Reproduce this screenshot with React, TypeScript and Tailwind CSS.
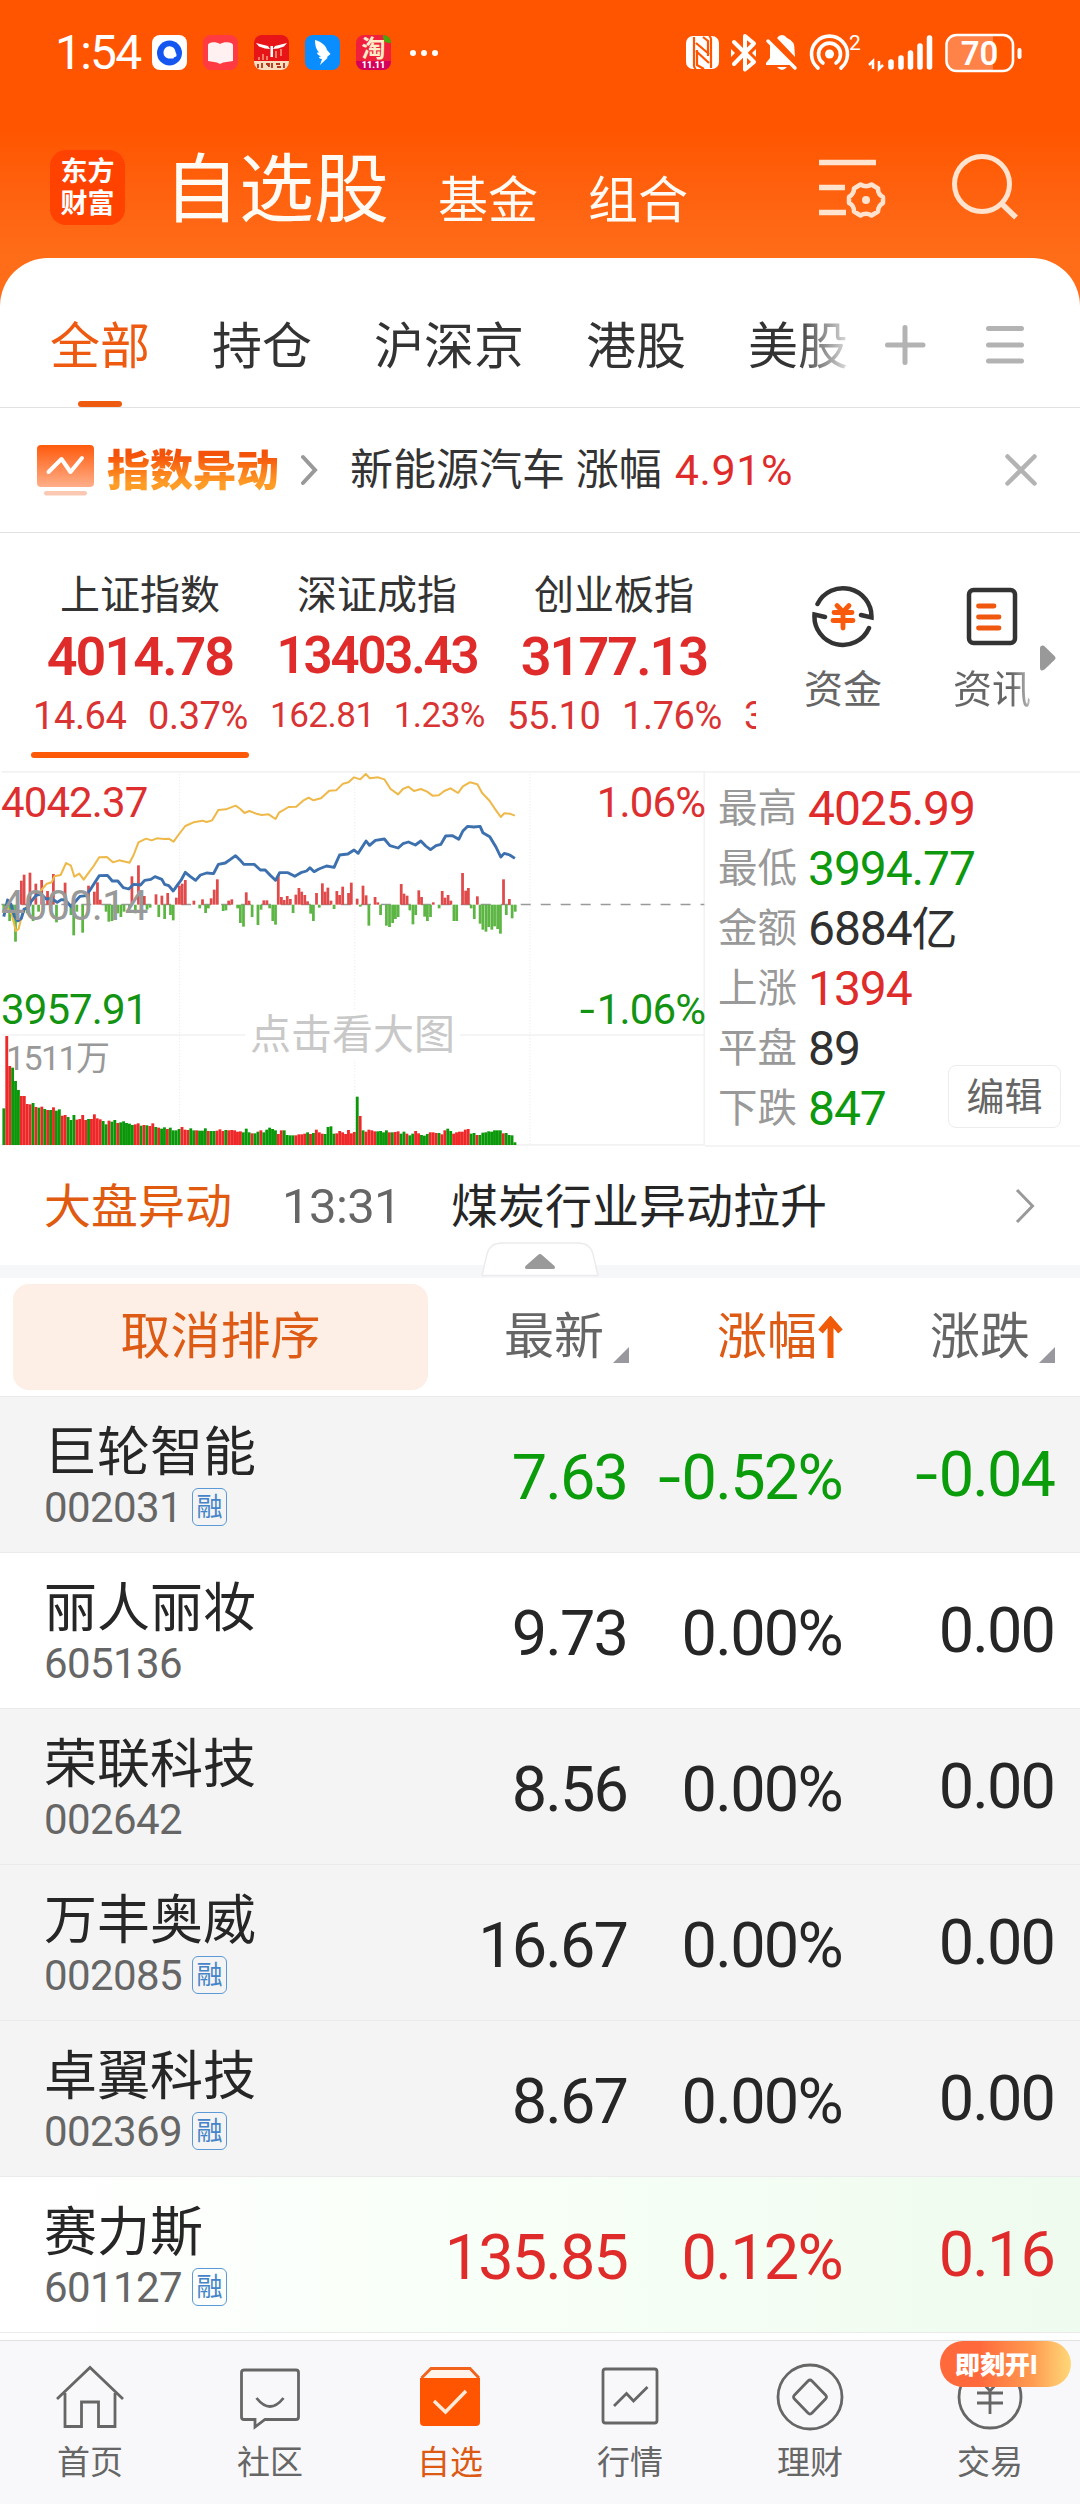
import type { ReactNode } from 'react';

const GROUPS = ['全部', '持仓', '沪深京', '港股', '美股'];

const INDEXES = [
  { name: '上证指数', value: '4014.78', change: '14.64', percent: '0.37%', active: true },
  { name: '深证成指', value: '13403.43', change: '162.81', percent: '1.23%', small: true },
  { name: '创业板指', value: '3177.13', change: '55.10', percent: '1.76%' },
  { name: '', value: '', change: '3', percent: '' },
];

const STATS = [
  { label: '最高', value: '4025.99', color: 'text-[#e02b2b]' },
  { label: '最低', value: '3994.77', color: 'text-[#0d980d]' },
  { label: '金额', value: '6884亿', color: 'text-[#303030]' },
  { label: '上涨', value: '1394', color: 'text-[#e02b2b]' },
  { label: '平盘', value: '89', color: 'text-[#303030]' },
  { label: '下跌', value: '847', color: 'text-[#0d980d]' },
];

const STOCKS = [
  { name: '巨轮智能', code: '002031', margin: true, price: '7.63', percent: '-0.52%', change: '-0.04', color: 'text-[#0a9c0a]', bg: 'bg-[#f4f4f4]' },
  { name: '丽人丽妆', code: '605136', margin: false, price: '9.73', percent: '0.00%', change: '0.00', color: 'text-[#262626]', bg: 'bg-white' },
  { name: '荣联科技', code: '002642', margin: false, price: '8.56', percent: '0.00%', change: '0.00', color: 'text-[#262626]', bg: 'bg-[#f4f4f4]' },
  { name: '万丰奥威', code: '002085', margin: true, price: '16.67', percent: '0.00%', change: '0.00', color: 'text-[#262626]', bg: 'bg-[#f4f4f4]' },
  { name: '卓翼科技', code: '002369', margin: true, price: '8.67', percent: '0.00%', change: '0.00', color: 'text-[#262626]', bg: 'bg-[#f4f4f4]' },
  { name: '赛力斯', code: '601127', margin: true, price: '135.85', percent: '0.12%', change: '0.16', color: 'text-[#e02b2b]', bg: 'bg-linear-to-r from-white via-[#f7fff7] to-[#effbee]' },
];

// minute volume, one entry per bar
const VOLUMES = [
  110, 327, 237, 232, 192, 165, 147, 147, 123, 122, 126, 114, 112, 115, 108, 105, 105, 113, 103, 107, 88, 90, 84, 75, 90,
  76, 78, 90, 75, 78, 78, 92, 80, 77, 72, 62, 73, 70, 75, 66, 68, 71, 66, 64, 60, 62, 65, 58, 60, 59, 57, 65, 54, 52, 49,
  53, 48, 52, 44, 44, 48, 54, 46, 45, 50, 44, 44, 43, 43, 50, 42, 42, 42, 43, 47, 42, 45, 44, 45, 44, 40, 41, 38, 49, 38,
  35, 35, 40, 44, 38, 46, 52, 48, 44, 33, 44, 44, 30, 29, 29, 29, 32, 32, 34, 38, 33, 36, 46, 38, 34, 33, 54, 56, 34, 35,
  42, 38, 33, 45, 35, 39, 145, 87, 44, 40, 46, 44, 41, 41, 42, 38, 44, 38, 38, 39, 41, 34, 40, 34, 29, 34, 42, 35, 30, 28,
  33, 38, 38, 36, 36, 32, 44, 49, 42, 34, 38, 40, 40, 46, 48, 34, 36, 30, 30, 37, 38, 41, 40, 44, 44, 44, 35, 36, 30, 29, 8,
];

const VOLUME_SIDES =
  'grrgggrrrrgrgrgrgrggrrgggrrrrgrrrrggrggrgggggrrgrgrrgrggrggggrrrggrgggrggrrrgrrrrrgggrggrgggggrrggggrrrrgrgrrrggggrrrrrrrgrgrrrrggggrgrrggrggrrgggrrrgrrggrrrrrrggrggggggggrgggg';

const UP_BARS: [number, number][] = [
  [62, 347], [70, 329], [87, 323], [104, 356], [121, 345], [138, 378], [155, 327], [189, 353], [257, 362], [274, 380],
  [283, 352], [291, 404], [383, 334], [402, 301], [419, 393], [453, 388], [470, 392], [487, 384], [512, 398], [521, 362],
  [529, 356], [538, 345], [563, 407], [588, 403], [613, 400], [622, 374], [631, 343], [664, 407], [673, 403], [715, 382],
  [723, 407], [766, 406], [775, 406], [808, 330], [817, 396], [825, 405], [834, 393], [843, 402], [859, 389], [868, 369],
  [876, 380], [885, 390], [893, 409], [919, 384], [936, 355], [944, 380], [952, 368], [961, 407], [978, 378], [986, 390],
  [995, 365], [1012, 384], [1020, 353], [1037, 401], [1054, 362], [1063, 391], [1089, 396], [1097, 412], [1165, 357],
  [1173, 386], [1182, 392], [1216, 376], [1224, 396], [1258, 412], [1284, 378], [1292, 398], [1301, 390], [1309, 407],
  [1343, 324], [1352, 377], [1360, 369], [1386, 394], [1462, 343], [1479, 402],
];

const DOWN_BARS: [number, number][] = [
  [11, 440], [28, 468], [37, 450], [45, 530], [79, 445], [96, 468], [112, 440], [164, 472], [206, 450], [214, 511],
  [223, 440], [240, 503], [308, 440], [316, 470], [325, 468], [334, 440], [342, 445], [351, 456], [360, 440], [376, 432],
  [393, 445], [427, 434], [436, 428], [461, 456], [478, 462], [495, 450], [503, 466], [580, 430], [597, 444], [605, 430],
  [648, 438], [656, 436], [690, 430], [698, 474], [707, 485], [732, 456], [749, 480], [758, 434], [783, 430], [792, 468],
  [800, 479], [851, 444], [902, 446], [910, 468], [927, 428], [970, 432], [1046, 425], [1071, 482], [1105, 450],
  [1122, 482], [1131, 486], [1140, 474], [1148, 462], [1156, 456], [1190, 436], [1199, 478], [1207, 450], [1233, 455],
  [1241, 468], [1250, 456], [1275, 430], [1318, 468], [1326, 468], [1368, 430], [1377, 462], [1394, 476], [1402, 494],
  [1411, 500], [1419, 486], [1428, 494], [1436, 484], [1445, 492], [1453, 506], [1470, 450], [1487, 460], [1496, 440],
];

const PRICE_LINE =
  '11,455 22,405 32,418 42,455 52,468 62,460 70,432 82,428 90,410 106,390 120,388 134,402 150,400 166,412 178,404 190,405 206,425 220,408 232,394 250,392 262,374 274,355 288,332 312,331 326,348 342,348 358,368 374,372 388,358 408,360 420,346 438,343 450,335 470,343 478,358 490,362 503,378 514,362 526,345 538,322 552,334 568,346 582,330 600,324 620,326 634,298 654,294 668,284 684,272 696,284 708,298 738,298 756,315 770,315 786,332 800,346 812,323 836,323 856,334 876,322 890,318 900,308 912,320 926,312 948,303 970,307 986,270 1010,267 1028,255 1040,265 1054,242 1063,228 1073,241 1090,226 1116,222 1132,242 1156,249 1170,236 1186,231 1206,240 1222,228 1236,243 1250,254 1266,242 1280,238 1294,213 1314,212 1332,223 1344,198 1358,184 1376,186 1394,184 1402,203 1422,215 1440,246 1454,276 1464,265 1480,270 1495,280';

const AVERAGE_LINE =
  '11,425 22,430 34,448 46,498 54,492 64,450 78,425 100,400 120,375 136,356 150,352 158,334 176,330 192,294 206,302 216,335 230,326 243,344 256,325 272,303 288,277 310,276 328,292 346,286 376,293 388,270 402,232 424,221 440,226 456,220 476,222 490,221 504,230 518,210 538,183 562,172 588,167 600,171 616,166 634,135 656,133 684,122 698,132 710,144 724,138 744,146 760,150 780,148 800,162 810,143 838,126 860,125 880,107 896,98 910,106 932,100 956,77 976,76 996,56 1012,52 1028,37 1046,43 1062,27 1074,40 1098,37 1116,43 1134,72 1156,88 1170,72 1186,65 1202,78 1222,72 1240,80 1256,92 1274,91 1290,78 1308,70 1330,84 1344,64 1364,52 1386,58 1400,84 1422,108 1436,130 1454,156 1464,145 1480,146 1495,152';

// number whose minus sign is drawn wider than the font's hyphen
function Num({ value }: { value: string }) {
  if (!value.startsWith('-')) return <>{value}</>;
  return (
    <>
      <span className="mr-[3px] inline-block origin-right scale-x-130">-</span>
      {value.slice(1)}
    </>
  );
}

function StatusBar() {
  return (
    <div className="flex h-26 items-center pt-[1px] pl-[55px] text-white">
      <span className="mr-2.5 w-[87px] text-[48px] leading-none tracking-[-1.8px]">1:54</span>
      <div className="flex items-center gap-4">
        <svg className="size-[35px]" viewBox="0 0 35 35">
          <rect width="35" height="35" rx="8" fill="#fff" />
          <circle cx="17.5" cy="18" r="12.5" fill="#1556f0" />
          <path d="M11.5 17.5a6 6 0 0 1 12-.5l1 2.500a2 2 0 0 1-1.500 2.500c-.8 0-1.200.5-1.500 1.500h-4c-3.500 0-6-2.500-6-6z" fill="#fff" />
        </svg>
        <svg className="size-[35px]" viewBox="0 0 35 35">
          <rect width="35" height="35" rx="8" fill="#ff3a42" />
          <path d="M5 10c0-3 8-4 12-1 4-3 13-2 13 1v16c-4 1-9 .5-13 3-4-2.500-8-2-12-3z" fill="#fff1f1" />
        </svg>
        <svg className="size-[35px]" viewBox="0 0 35 35">
          <rect width="35" height="35" rx="8" fill="#e81518" />
          <path d="M0 26h35v1a8 8 0 0 1-8 8H8a8 8 0 0 1-8-8z" fill="#f8dfc0" />
          <path d="M2 8l12 3 2 3-5-.5-6-2zM33 8l-12 3-2 3 5-.5 6-2zM16.500 11h2.500v11h-2.500z" fill="#fff" />
          <path d="M5 22v3M9 19v6M13 21v4M22 16v7M27 14v7" stroke="#f0a080" strokeWidth="1.500" />
          <path d="M4 29v4M8 28v5M12 29h3v3M18 28v5M22 29h4M23 32h4M30 28v5" stroke="#b3361f" strokeWidth="1.800" />
        </svg>
        <svg className="size-[35px]" viewBox="0 0 35 35">
          <rect width="35" height="35" rx="8" fill="#0a8dff" />
          <path d="M10 5c7 2 11 6 12 10l3.500 4-3.500 3 .5 1-7.500 7 2-6c-2 0-3-1-3-2l2-.5c-3-1-4-3-4-4l2 0c-3-3-4-7-4-12.500z" fill="#fff" />
        </svg>
        <div className="relative flex size-[35px] flex-col items-center overflow-hidden rounded-lg bg-linear-to-b from-[#f0203c] from-75% to-[#d4005c] to-75%">
          <span className="absolute -top-1 -right-1 size-3 rounded-full bg-[#47a80c]" />
          <span className="mt-0.5 text-[24px] leading-6 font-bold text-[#ffedc9]">淘</span>
          <span className="text-[9px] leading-[9px] font-black">11.11</span>
        </div>
      </div>
      <div className="ml-[19px] flex gap-[5px]">
        <i className="size-[6px] rounded-full bg-white" />
        <i className="size-[6px] rounded-full bg-white" />
        <i className="size-[6px] rounded-full bg-white" />
      </div>
      <svg className="ml-auto h-[50px] w-[340px]" viewBox="684 27 340 50" fill="none" stroke="#fff">
        {/* nfc */}
        <rect x="686" y="35" width="33" height="33" rx="7" fill="#fff" stroke="none" />
        <path d="M694 36v29q0 2 2 3M711 67V38q0-2-2-3M697 49v15l7 4M708 55V40l-5-4M696 42l13 11M696 50l13 12" stroke="#ff5500" strokeWidth="2.200" />
        {/* bluetooth */}
        <path d="M734 41l20 20-9 7.500V35l9 7.500L734 63" strokeWidth="4" strokeLinejoin="round" strokeLinecap="round" />
        <path d="M731 48v8l4-4zM756 48v8l-4-4z" fill="#fff" stroke="none" />
        {/* muted bell */}
        <path d="M777 37q2-3 5-3t5 3q8 3 7.500 12l.5 7zM770 43l24 21h-28v-2l4-5zM777 66h10q-5 6-10 0z" fill="#fff" stroke="none" />
        <path d="M768 40l27 27" strokeWidth="3.500" strokeLinecap="round" />
        {/* hotspot */}
        <circle cx="829.500" cy="53" r="4.500" fill="#fff" stroke="none" />
        <path d="M823 62a11 11 0 1 1 13 0M818 67a18 18 0 1 1 23 0" strokeWidth="3.600" strokeLinecap="round" />
        <text x="849" y="49" fontSize="21" fill="#fff" stroke="none">2</text>
        {/* signal */}
        <path d="M873 68v-8l-4 4M879 60v8l4-4" strokeWidth="2.500" />
        <path d="M891 61v5M901 57v9M910.500 52v14M920 45v21M929.500 37v29" strokeWidth="5.500" strokeLinecap="round" />
        {/* battery */}
        <path d="M956 35h37v34h-37q-8 0-8-8V43q0-8 8-8z" fill="#ff8248" stroke="none" />
        <rect x="946.500" y="34" width="66.500" height="36" rx="10" strokeWidth="2.600" />
        <path d="M1019.500 49v7" strokeWidth="4" strokeLinecap="round" />
        <text x="979.500" y="63.500" fontSize="33" fontWeight="600" fill="#fff" stroke="none" textAnchor="middle">70</text>
      </svg>
      <div className="w-14" />
    </div>
  );
}

function TitleBar() {
  return (
    <div className="flex items-start pt-[46px] pl-[50px] text-[#fffaf3]">
      <div className="flex size-[75px] flex-col items-center justify-center rounded-2xl bg-[#ff4200] text-[27px] leading-[32px] font-bold text-white">
        <span>东方</span>
        <span>财富</span>
      </div>
      <h1 className="mt-[3px] ml-[39px] text-[75px] leading-[75px]">自选股</h1>
      <span className="mt-[26px] ml-[49px] text-[50px] leading-[50px]">基金</span>
      <span className="mt-[26px] ml-[50px] text-[50px] leading-[50px]">组合</span>
      <svg className="-mt-1 ml-[128px] h-[80px] w-[205px]" viewBox="817 146 205 80" fill="none" stroke="#ffe3cf">
        <path d="M820 162.500h57M820 187.500h26M820 212.500h27" strokeWidth="5.500" />
        <path
          d="M861.500 184.500q5.500 3.500 11 0l6.500 4q-.2 6 5 8.500v6q-5 3-5 8.500l-6.500 4q-5.500-3.500-11 0l-6.500-4q.2-6-5-8.500v-6q5-3 5-8.500z"
          strokeWidth="4.500"
          strokeLinejoin="round"
        />
        <circle cx="867" cy="200" r="4" fill="#ffe3cf" stroke="none" />
        <circle cx="983" cy="184" r="27.500" strokeWidth="5" />
        <path d="M1003 204l14 13.500" strokeWidth="5.500" />
      </svg>
    </div>
  );
}

function GroupTabs() {
  return (
    <div className="flex h-[150px] items-center rounded-t-[48px] border-b border-[#e2e2e2] bg-white pl-[50px]">
      <div className="relative flex h-full w-[802px] items-center gap-[62px] overflow-hidden">
        {GROUPS.map((group, i) => (
          <div key={group} className="relative flex h-full shrink-0 items-center">
            <span className={`mt-[28px] text-[50px] leading-none ${i === 0 ? 'text-[#ee5a10]' : 'text-[#333]'}`}>{group}</span>
            {i === 0 && <span className="absolute bottom-0 left-7 h-[6px] w-11 rounded-full bg-[#ee5a10]" />}
          </div>
        ))}
        <span className="absolute top-0 right-0 h-full w-14 bg-linear-to-r from-transparent to-white/90" />
      </div>
      <svg className="mt-[25px] ml-[30px] h-11 w-[146px]" viewBox="882 323 146 44" stroke="#b3b3b3" strokeWidth="5" strokeLinecap="round">
        <path d="M887.500 345h35.500M905 327.500v35M988.500 328.500h33M988.500 345h33M988.500 361h33" />
      </svg>
    </div>
  );
}

function Notice() {
  return (
    <div className="flex h-[125px] items-center border-b border-[#e2e2e2] bg-white pl-[37px]">
      <svg className="h-[51px] w-[57px]" viewBox="0 0 57 51" fill="none">
        <defs>
          <linearGradient id="notice" x1="0" y1="0" x2="0" y2="1">
            <stop stopColor="#ff5a0c" />
            <stop offset="1" stopColor="#ffaf8a" />
          </linearGradient>
        </defs>
        <rect width="57" height="42" rx="4" fill="url(#notice)" />
        <path d="M11.500 27l13-13 9 13L45 13" stroke="#fff" strokeWidth="4" strokeLinecap="round" strokeLinejoin="round" />
        <rect x="7" y="46" width="43" height="4.500" rx="2.200" fill="#fbc9b3" />
      </svg>
      <span className="mt-[2px] ml-[13px] bg-linear-to-b from-[#f4520a] from-20% to-[#ff9c26] to-75% bg-clip-text text-[43px] leading-[50px] font-black text-transparent">指数异动</span>
      <svg className="ml-[22px] h-8 w-[17px]" viewBox="0 0 17 32" fill="none" stroke="#999" strokeWidth="4">
        <path d="M2 3l12 13L2 29" strokeLinecap="round" />
      </svg>
      <p className="ml-8 text-[43px] leading-none whitespace-pre text-[#333]">
        新能源汽车 涨幅<span className="ml-[13px] tracking-[0.6px] text-[#e02b2b]">4.91%</span>
      </p>
      <svg className="mr-[42px] ml-auto size-[34px]" viewBox="0 0 34 34" stroke="#b3b3b3" strokeWidth="4.500" strokeLinecap="round">
        <path d="M3.500 3.500l27 27M30.500 3.500l-27 27" />
      </svg>
    </div>
  );
}

function IndexStrip() {
  return (
    <div className="flex h-[238px] bg-white pl-[31px]">
      <div className="flex w-[725px] gap-[19px] overflow-hidden">
        {INDEXES.map((item) => (
          <div key={item.change} className="flex h-[225px] w-[218px] shrink-0 flex-col">
            <span className="mt-[43px] h-10 text-center text-[40px] leading-10 text-[#333]">{item.name}</span>
            <span
              className={`mt-[12px] flex h-[56px] items-center justify-center font-semibold text-[#e02b2b] ${item.small ? 'text-[51px] tracking-[-2.2px]' : 'text-[54px] tracking-[-2px]'}`}
            >
              {item.value}
            </span>
            <div
              className={`mt-[10px] flex h-11 items-center justify-between pr-px pl-[2px] text-[#d93333] ${item.small ? 'text-[35px] tracking-[-0.5px]' : 'text-[38px] tracking-[-0.4px]'}`}
            >
              <span>{item.change}</span>
              <span>{item.percent}</span>
            </div>
            {item.active && <span className="mt-[14px] h-[6px] w-full rounded-full bg-[#fc5a08]" />}
          </div>
        ))}
      </div>
      <div className="ml-[47px] flex w-20 flex-col items-center pt-[50px]">
        <svg className="h-[66px] w-[66px]" viewBox="-33 -33 66 66" fill="none" stroke="#333" strokeWidth="4.500">
          <path d="M-25.500-12A28.500 28.500 0 0 1 28.500 1.500L18-1M26 12A28.500 28.500 0 0 1-28.500-1.500L-18 1" strokeLinecap="round" />
          <path d="M-6-10.500L0-4l6-6.500M-9-3.500H9M-10 4.500h20M0-4v16" stroke="#f95a0c" strokeWidth="4.800" strokeLinecap="round" />
        </svg>
        <span className="mt-[21px] text-[39px] leading-10 text-[#666]">资金</span>
      </div>
      <div className="ml-[69px] flex w-20 flex-col items-center pt-[50px]">
        <svg className="h-[66px] w-[54px]" viewBox="0 0 54 66" fill="none" stroke="#333" strokeWidth="4.500">
          <rect x="4" y="7" width="46" height="53" rx="4.500" />
          <path d="M13.500 23H29M13.500 34h20.500M13.500 45h20.500" stroke="#f0570f" strokeWidth="4.800" strokeLinecap="round" />
        </svg>
        <span className="mt-[21px] bg-linear-to-r from-[#666] from-75% to-[#bbb] bg-clip-text text-[39px] leading-10 text-transparent">资讯</span>
      </div>
      <svg className="mt-[112px] ml-[8px] h-[26px] w-4" viewBox="0 0 16 26" fill="#999">
        <path d="M0 3q0-3 3-2.500l1.500.8L14.500 11q2 2 0 4L4.500 24.500Q0 27 0 22.500z" />
      </svg>
    </div>
  );
}

function MinuteChart() {
  return (
    <div className="relative h-[376px] w-[705px]">
      <svg className="h-full w-full" viewBox="0 18 2047 1128" preserveAspectRatio="none" fill="none">
        <path d="M4 20.500H2047M4 810H2047M4 1139.500H2047M2045 20V1139" stroke="#f2f2f2" strokeWidth="5" />
        <path d="M521 28V1139M1030 28V1139M1539 28V1139" stroke="#e8e8e8" strokeWidth="3" strokeDasharray="3 6" />
        <path d="M4 418.500H2045" stroke="#999" strokeWidth="5" strokeDasharray="29 29" />
        {UP_BARS.map(([x, y]) => (
          <rect key={x} x={x - 4} y={y} width="8" height={419 - y} fill="#e04a4a" />
        ))}
        {DOWN_BARS.map(([x, y]) => (
          <rect key={x} x={x - 4} y="419" width="8" height={y - 419} fill="#5db544" />
        ))}
        {VOLUMES.map((v, i) => (
          <rect key={i} x={7 + i * 8.48} y={1140 - v} width="8.3" height={v} fill={VOLUME_SIDES[i] === 'r' ? '#ee2828' : '#0a980a'} />
        ))}
        <polyline points={AVERAGE_LINE} stroke="#efb94a" strokeWidth="6" strokeLinejoin="round" />
        <polyline points={PRICE_LINE} stroke="#3d70ae" strokeWidth="8.500" strokeLinejoin="round" />
      </svg>
      {/* axis labels sit over the plot */}
      <div className="absolute inset-0 text-[42px] leading-[42px] tracking-[-0.9px]">
        <span className="absolute top-[11px] left-px text-[#dd2f2f]">4042.37</span>
        <span className="absolute top-[114px] left-px text-[#999]">4000.14</span>
        <span className="absolute top-[218px] left-px text-[#129412]">3957.91</span>
        <span className="absolute top-[266px] left-[6px] text-[34px] tracking-[-1.6px] text-[#999]">1511万</span>
        <span className="absolute top-[11px] right-0 text-[#dd2f2f]">1.06%</span>
        <span className="absolute top-[218px] right-0 text-[#129412]">
          <Num value="-1.06%" />
        </span>
        <span className="absolute top-[239px] left-[245px] bg-white px-[5px] text-[41px] leading-[50px] tracking-normal text-[#c8c8c8]">点击看大图</span>
      </div>
    </div>
  );
}

function StatsPanel() {
  return (
    <div className="relative flex-1 border-y-2 border-[#f4f4f4] pt-[6px] pl-[13px]">
      {STATS.map((stat) => (
        <div key={stat.label} className="flex h-[60px] items-center">
          <span className="w-[90px] text-[39.5px] leading-none text-[#999]">{stat.label}</span>
          <span className={`text-[48px] leading-none tracking-[-1.1px] ${stat.color}`}>
            {stat.value.replace('亿', '')}
            {stat.value.includes('亿') && <span className="text-[46px]">亿</span>}
          </span>
        </div>
      ))}
      <button className="absolute right-[19px] bottom-[17px] h-[63px] w-[113px] rounded-lg border border-[#ececec] bg-white text-[38px] leading-none text-[#666]">
        编辑
      </button>
    </div>
  );
}

function MarketAlert() {
  return (
    <div className="relative h-[131px] border-b-13 border-[#f6f7f9] bg-white">
      <div className="flex h-[118px] items-center pl-[44px] text-[47px] leading-none">
        <span className="text-[#e05a10]">大盘异动</span>
        <span className="ml-[50px] w-[117px] text-[49px] tracking-[-0.6px] text-[#666]">13:31</span>
        <span className="ml-[52px] text-[#262626]">煤炭行业异动拉升</span>
        <svg className="mr-[45px] ml-auto h-[36px] w-5" viewBox="0 0 20 36" fill="none" stroke="#999" strokeWidth="3">
          <path d="M2 2l15.500 16L2 34" />
        </svg>
      </div>
      <svg className="absolute top-[95px] left-[481px] h-[35px] w-[118px]" viewBox="0 0 118 35">
        <path d="M1 33.500L6 12Q9 1 21 1h76q12 0 15 11l5 21.500z" fill="#fff" stroke="#ececee" strokeWidth="1.500" />
        <path d="M57 13q2-2 4 0l12.500 11q1.500 3-1.500 3H46q-3 0-1.500-3z" fill="#999" />
      </svg>
    </div>
  );
}

function SortHeader() {
  return (
    <div className="flex h-[119px] items-center border-b border-[#ebebeb] bg-white pl-[13px] text-[50px] leading-none text-[#666]">
      <button className="h-[106px] w-[415px] rounded-2xl bg-[#fdeee6] text-[#dd5b14]">取消排序</button>
      <div className="ml-[76px] flex w-[213px] items-center">
        最新
        <Corner />
      </div>
      <div className="flex w-[213px] items-center text-[#dd5b14]">
        涨幅
        <svg className="ml-px h-[42px] w-[25px]" viewBox="0 0 25 42" fill="none" stroke="#f05a08" strokeWidth="6">
          <path d="M12.500 4v38M2.500 15.500l10-11.500 10 11.500" />
        </svg>
      </div>
      <div className="flex items-center">
        涨跌
        <Corner />
      </div>
    </div>
  );
}

function Corner() {
  return (
    <svg className="mt-[36px] ml-[9px] size-4" viewBox="0 0 16 16" fill="#98989e">
      <path d="M16 0v16H0z" />
    </svg>
  );
}

function StockRow({ stock }: { stock: (typeof STOCKS)[number] }) {
  return (
    <div className={`grid h-[156px] grid-cols-[330px_297px_215px_212px] items-center border-b border-[#ebebeb] text-right ${stock.bg}`}>
      <div className="pl-[44px] text-left">
        <div className="mt-[4px] text-[53px] leading-[56px] text-[#262626]">{stock.name}</div>
        <div className="mt-[5px] flex h-[42px] items-center text-[42px] tracking-[-0.6px] text-[#666]">
          {stock.code}
          {stock.margin && (
            <span className="ml-[10px] flex h-[38px] w-[35px] items-center justify-center rounded-md border border-[#5b9ad6] text-[26px] leading-none tracking-normal text-[#4584c8]">
              融
            </span>
          )}
        </div>
      </div>
      <span className={`mt-[5px] text-[63px] leading-none tracking-[-1.9px] ${stock.color}`}>
        <Num value={stock.price} />
      </span>
      <span className={`mt-[5px] text-[63px] leading-none tracking-[-1.7px] ${stock.color}`}>
        <Num value={stock.percent} />
      </span>
      <span className={`text-[63px] leading-none tracking-[-1.9px] ${stock.color}`}>
        <Num value={stock.change} />
      </span>
    </div>
  );
}

function NavItem({ label, active, children }: { label: string; active?: boolean; children: ReactNode }) {
  return (
    <div className={`relative flex flex-1 flex-col items-center pt-[21px] ${active ? 'text-[#dc5a14]' : 'text-[#666]'}`}>
      <svg className="size-[70px]" viewBox="-35 -35 70 70" fill="none" stroke="currentColor" strokeWidth="2.800">
        {children}
      </svg>
      <span className="mt-[13px] text-[33px] leading-9">{label}</span>
    </div>
  );
}

function BottomNav() {
  return (
    <nav className="flex h-[164px] border-t border-[#e2e2e2] bg-[#f8f8fa]">
      <NavItem label="首页">
        <path d="M-33 2L0-29.500 33 2M-25-4v33.500h16.500V5H8.500v24.500H25V-4" />
      </NavItem>
      <NavItem label="社区">
        <path d="M-25.500-27H26q2.500 0 2.500 2.500V20q0 2.500-2.500 2.500H-5L-15 30v-7.500h-11q-2.500 0-2.500-2.500v-44.500q0-2.500 3-2.500zM-13.500 1q13.500 17 27 0" />
      </NavItem>
      <NavItem label="自选" active>
        <path d="M-28.500-19L-19-28.500h39L29-19" fill="#fff3ea" stroke="#f2621c" />
        <path d="M-30-19H30v44q0 4-4 4h-52q-4 0-4-4z" fill="#ff5500" stroke="none" />
        <path d="M-16 4L-4.500 15 16-6" stroke="#ffe9d8" strokeWidth="3.500" />
      </NavItem>
      <NavItem label="行情">
        <rect x="-27" y="-28" width="54" height="54" rx="2.500" />
        <path d="M-16 9l12.500-12.500 7 7.500L17.500-10" />
      </NavItem>
      <NavItem label="理财">
        <circle r="32" />
        <path d="M-2-16q2-2 4 0l13.500 14q2 2 0 4L2 16q-2 2-4 0L-15.500 2q-2-2 0-4z" />
      </NavItem>
      <div className="relative flex flex-1">
        <NavItem label="交易">
          <circle r="31" />
          <path d="M-8-15L0-6l8-9M-13-4h26M-13 6h26M0-6v23" />
        </NavItem>
        <span className="absolute top-0 left-10 h-[46px] w-[131px] rounded-full bg-linear-to-r from-[#ff693c] from-30% via-[#ff9a50] via-70% to-[#ffd878] pl-[15px] text-[25px] leading-[49px] font-black text-white">
          即刻开I
        </span>
      </div>
    </nav>
  );
}

export default function App() {
  return (
    <div className="flex h-[2504px] w-[1080px] flex-col overflow-hidden bg-white font-[Roboto,'Noto_Sans_CJK_SC',sans-serif]">
      <header className="h-[258px] shrink-0 bg-linear-to-b from-[#ff5500] from-50% to-[#ff6d19]">
        <StatusBar />
        <TitleBar />
      </header>
      <div className="shrink-0 bg-[#ff6d19]">
        <GroupTabs />
      </div>
      <Notice />
      <IndexStrip />
      <div className="flex h-[376px] shrink-0 bg-white">
        <MinuteChart />
        <StatsPanel />
      </div>
      <MarketAlert />
      <SortHeader />
      <main>
        {STOCKS.map((stock) => (
          <StockRow key={stock.code} stock={stock} />
        ))}
      </main>
      <div className="mt-auto shrink-0">
        <BottomNav />
      </div>
    </div>
  );
}
